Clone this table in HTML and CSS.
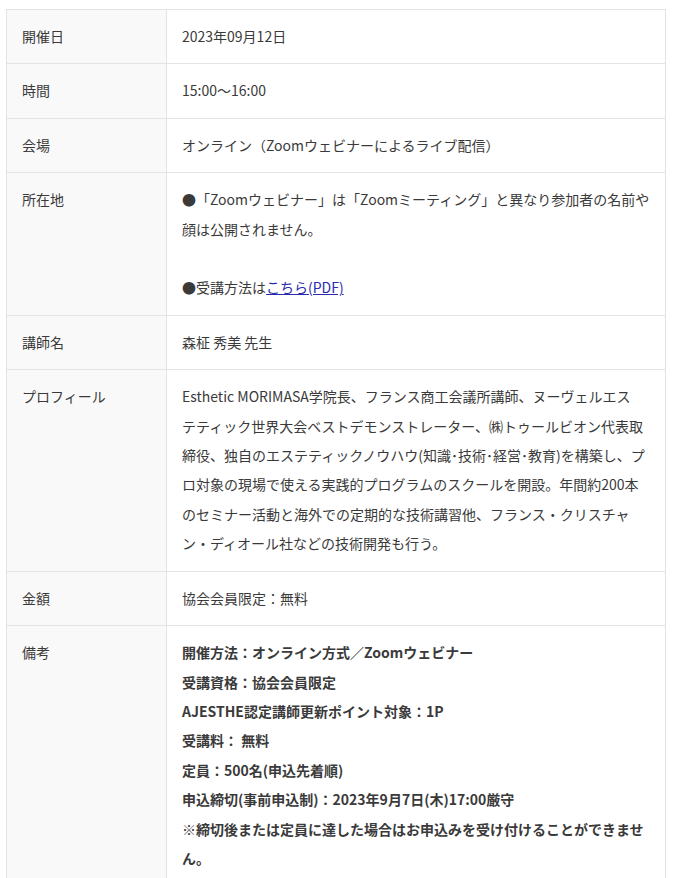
FILE: index.html
```html
<!DOCTYPE html>
<html lang="ja">
<head>
    <meta charset="UTF-8">
    <meta name="viewport" content="width=device-width, initial-scale=1.0">
    <title>セミナー詳細</title>
    <link rel="stylesheet" href="styles.css">
</head>
<body>
    <table class="detail-table">
        <tr>
            <th>開催日</th>
            <td>2023年09月12日</td>
        </tr>
        <tr>
            <th>時間</th>
            <td>15:00～16:00</td>
        </tr>
        <tr>
            <th>会場</th>
            <td>オンライン（Zoomウェビナーによるライブ配信）</td>
        </tr>
        <tr>
            <th>所在地</th>
            <td>●「Zoomウェビナー」は「Zoomミーティング」と異なり参加者の名前や顔は公開されません。<br><br>●受講方法は<a href="#">こちら(PDF)</a></td>
        </tr>
        <tr>
            <th>講師名</th>
            <td>森柾 秀美 先生</td>
        </tr>
        <tr>
            <th>プロフィール</th>
            <td class="profile">Esthetic MORIMASA学院長、フランス商工会議所講師、ヌーヴェルエス<br>テティック世界大会ベストデモンストレーター、㈱トゥールビオン代表取<br>締役、独自のエステティックノウハウ(知識･技術･経営･教育)を構築し、プ<br>ロ対象の現場で使える実践的プログラムのスクールを開設。年間約200本<br>のセミナー活動と海外での定期的な技術講習他、フランス・クリスチャ<br>ン・ディオール社などの技術開発も行う。</td>
        </tr>
        <tr>
            <th>金額</th>
            <td>協会会員限定：無料</td>
        </tr>
        <tr>
            <th>備考</th>
            <td class="notes">
                開催方法：オンライン方式／Zoomウェビナー<br>
                受講資格：協会会員限定<br>
                AJESTHE認定講師更新ポイント対象：1P<br>
                受講料： 無料<br>
                定員：500名(申込先着順)<br>
                申込締切(事前申込制)：2023年9月7日(木)17:00厳守<br>
                ※締切後または定員に達した場合はお申込みを受け付けることができません。
            </td>
        </tr>
    </table>
</body>
</html>
```

FILE: styles.css
```css
body {
    margin: 0;
    padding: 9px 9px 0 6px;
    background: #fff;
    font-family: "Noto Sans CJK JP", "Noto Sans", sans-serif;
    font-size: 14px;
    color: #3a3a3a;
}

.detail-table {
    width: 660px;
    border-collapse: collapse;
    border: 1px solid #e3e3e3;
}

.detail-table th,
.detail-table td {
    border: 1px solid #e3e3e3;
    padding: 12px 15px;
    line-height: 29.4px;
    text-align: left;
    vertical-align: top;
    font-weight: normal;
}

.detail-table th {
    width: 129px;
    background: #f9f9f9;
}

.detail-table td {
    background: #fff;
}

.detail-table a {
    color: #2b2bb0;
    text-decoration: underline;
}

.profile {
    white-space: nowrap;
}

.notes {
    font-weight: bold !important;
}
```
